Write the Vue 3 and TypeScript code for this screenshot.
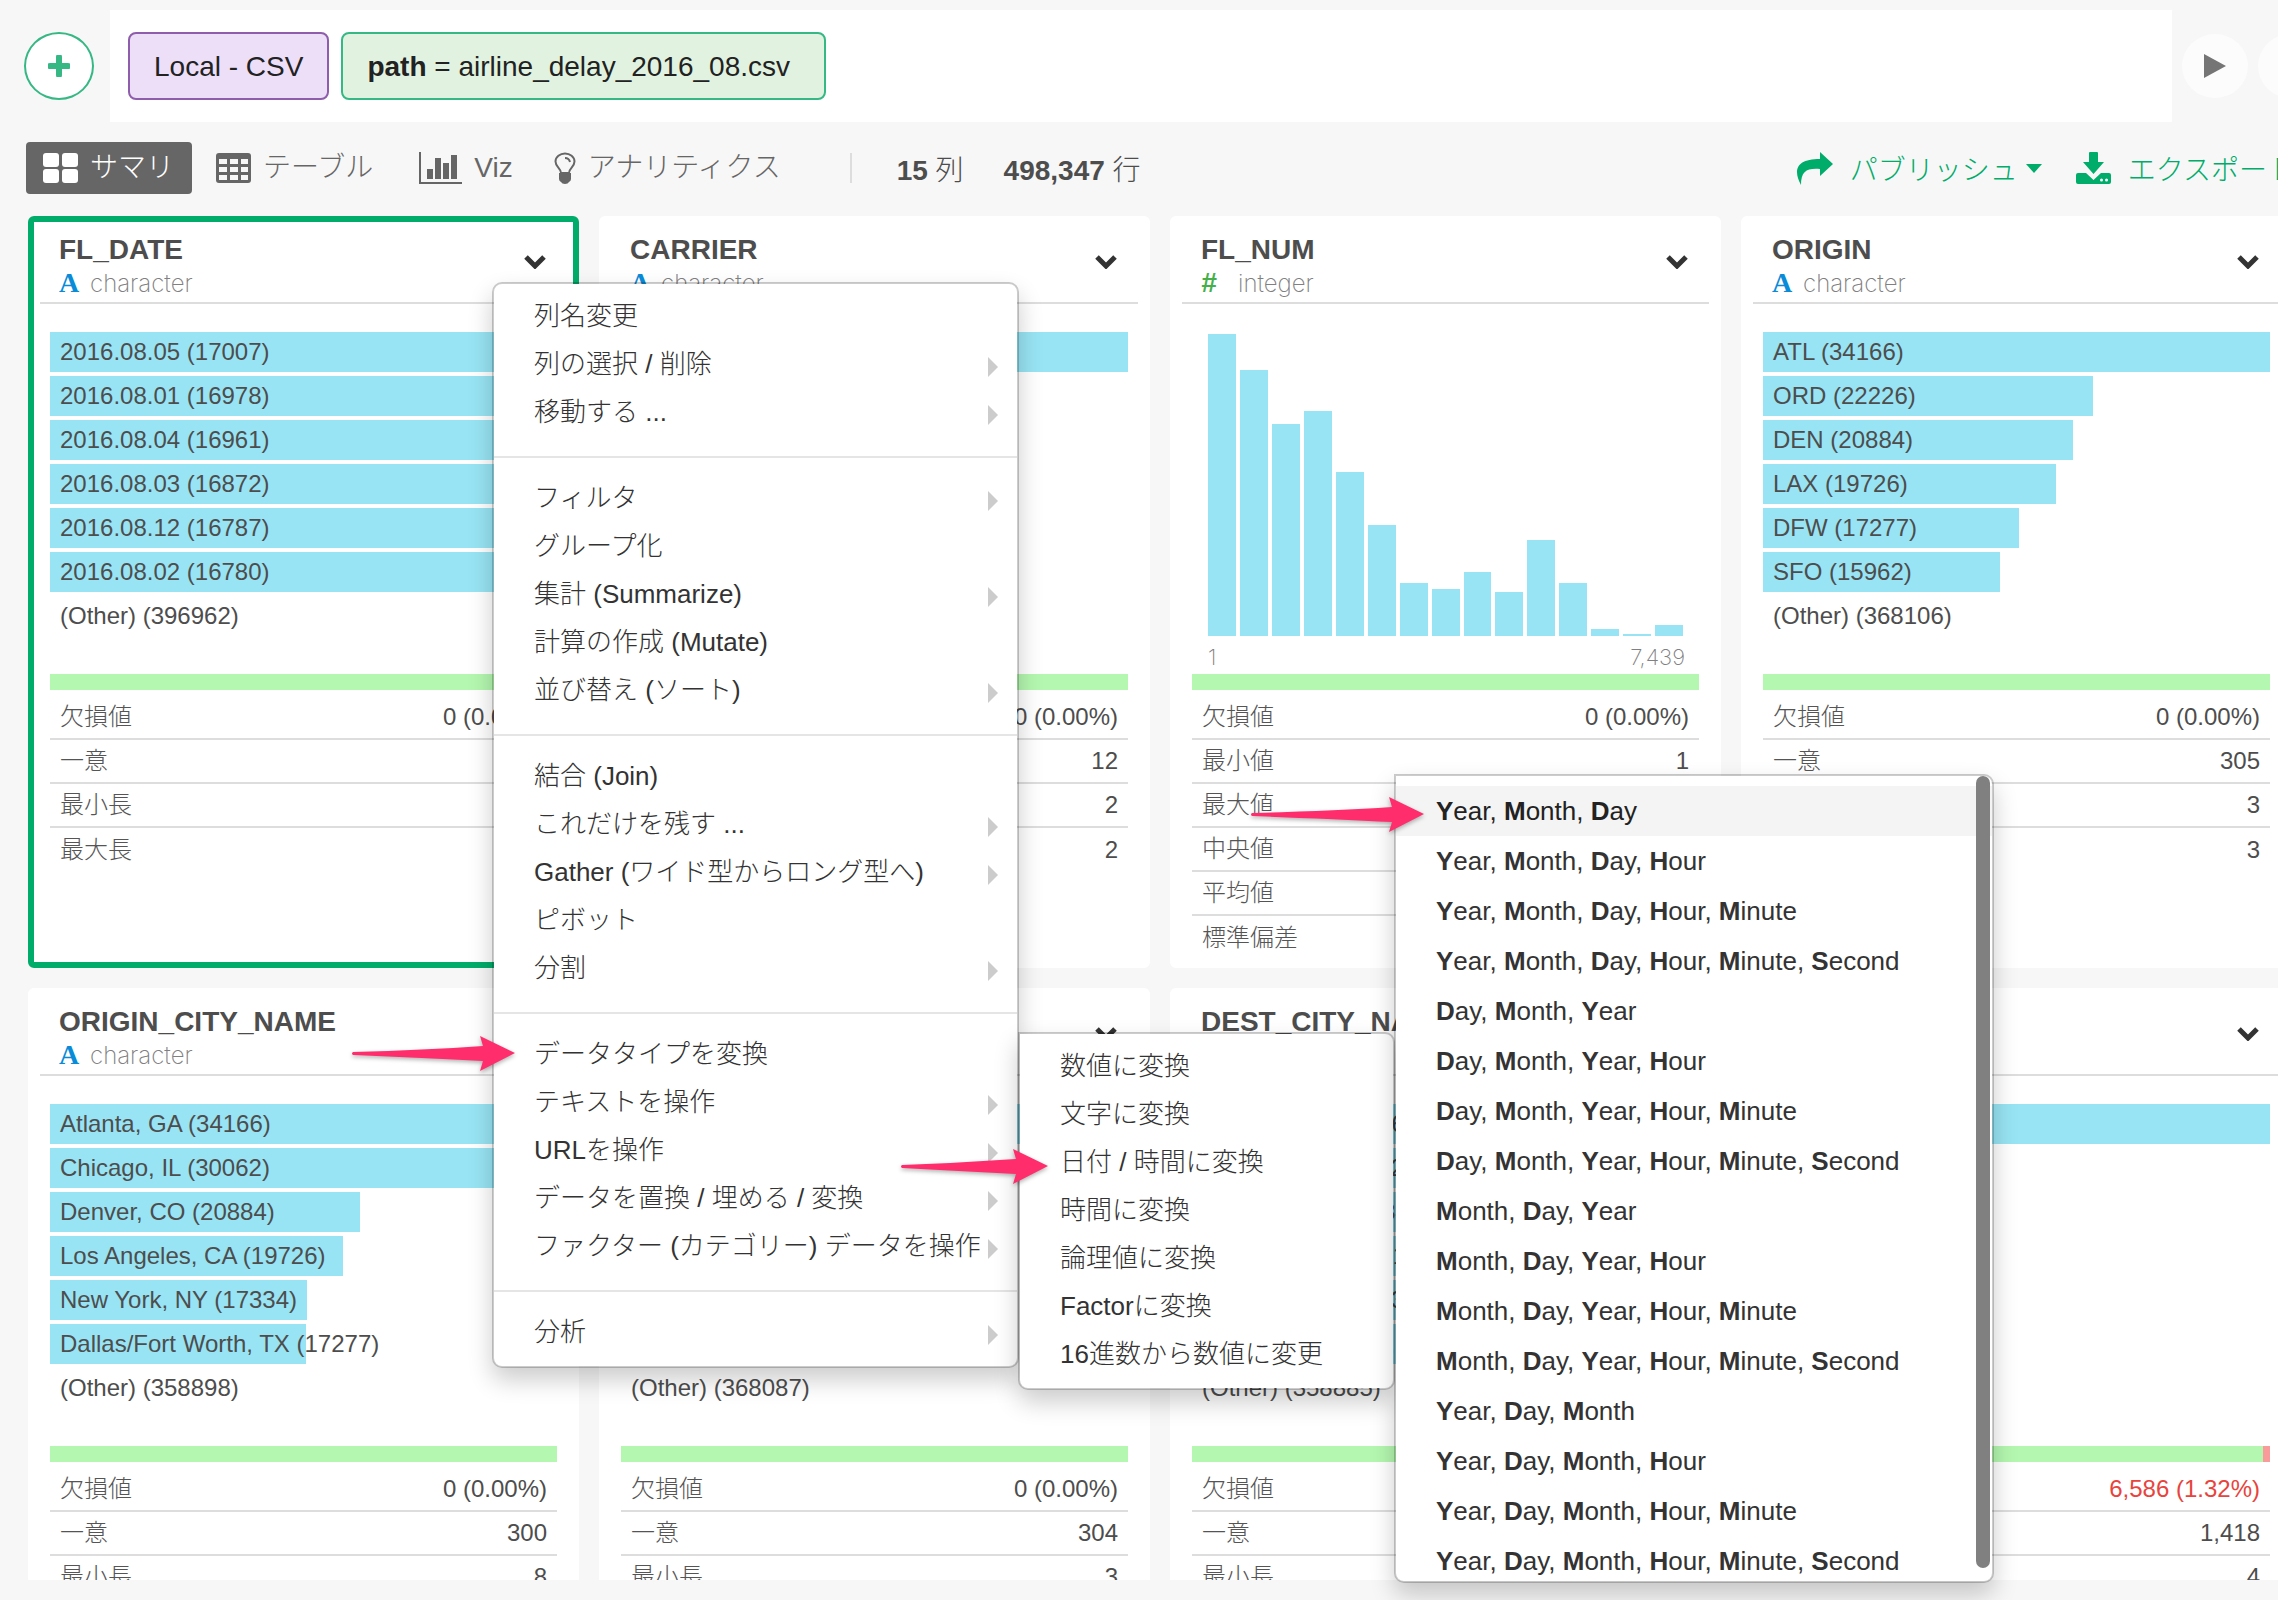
<script setup lang="ts">
interface Entry { label: string; count: number }
interface Stat { name: string; value: string; alert?: boolean }
interface Column {
  name: string
  kind: 'character' | 'integer'
  entries?: Entry[]
  other?: string
  histogram?: number[]
  range?: [string, string]
  valid: number
  stats: Stat[]
  selected?: boolean
}
interface MenuItem { text: string; sub?: boolean }
interface Arrow { x: number; y: number; length: number }

const none = '0 (0.00%)'

const textStats = (missing: string, unique: string, min: string, max: string, alert = false): Stat[] => [
  { name: '欠損値', value: missing, alert },
  { name: '一意', value: unique },
  { name: '最小長', value: min },
  { name: '最大長', value: max },
]

const cities: Entry[] = [
  { label: 'Atlanta, GA (34166)', count: 34166 },
  { label: 'Chicago, IL (30062)', count: 30062 },
  { label: 'Denver, CO (20884)', count: 20884 },
  { label: 'Los Angeles, CA (19726)', count: 19726 },
  { label: 'New York, NY (17334)', count: 17334 },
  { label: 'Dallas/Fort Worth, TX (17277)', count: 17277 },
]

const columns: Column[] = [
  {
    name: 'FL_DATE',
    kind: 'character',
    selected: true,
    entries: [
      { label: '2016.08.05 (17007)', count: 17007 },
      { label: '2016.08.01 (16978)', count: 16978 },
      { label: '2016.08.04 (16961)', count: 16961 },
      { label: '2016.08.03 (16872)', count: 16872 },
      { label: '2016.08.12 (16787)', count: 16787 },
      { label: '2016.08.02 (16780)', count: 16780 },
    ],
    other: '(Other) (396962)',
    valid: 100,
    stats: textStats(none, '', '', ''),
  },
  {
    name: 'CARRIER',
    kind: 'character',
    entries: [{ label: '', count: 1 }],
    valid: 100,
    stats: textStats(none, '12', '2', '2'),
  },
  {
    name: 'FL_NUM',
    kind: 'integer',
    histogram: [302, 266, 212, 225, 164, 111, 53, 47, 64, 44, 96, 53, 7, 2, 11],
    range: ['1', '7,439'],
    valid: 100,
    stats: [
      { name: '欠損値', value: none },
      { name: '最小値', value: '1' },
      { name: '最大値', value: '' },
      { name: '中央値', value: '' },
      { name: '平均値', value: '' },
      { name: '標準偏差', value: '' },
    ],
  },
  {
    name: 'ORIGIN',
    kind: 'character',
    entries: [
      { label: 'ATL (34166)', count: 34166 },
      { label: 'ORD (22226)', count: 22226 },
      { label: 'DEN (20884)', count: 20884 },
      { label: 'LAX (19726)', count: 19726 },
      { label: 'DFW (17277)', count: 17277 },
      { label: 'SFO (15962)', count: 15962 },
    ],
    other: '(Other) (368106)',
    valid: 100,
    stats: textStats(none, '305', '3', '3'),
  },
  {
    name: 'ORIGIN_CITY_NAME',
    kind: 'character',
    entries: cities,
    other: '(Other) (358898)',
    valid: 100,
    stats: textStats(none, '300', '8', ''),
  },
  {
    name: '',
    kind: 'character',
    entries: ['', '', '', '', '', ''].map((label, i) => ({ label, count: [34, 22, 21, 20, 17, 16][i] })),
    other: '(Other) (368087)',
    valid: 100,
    stats: textStats(none, '304', '3', ''),
  },
  {
    name: 'DEST_CITY_NAME',
    kind: 'character',
    entries: cities,
    other: '(Other) (358885)',
    valid: 100,
    stats: textStats('', '', '', ''),
  },
  {
    name: '',
    kind: 'character',
    entries: [{ label: '', count: 1 }],
    valid: 98.7,
    stats: textStats('6,586 (1.32%)', '1,418', '4', '', true),
  },
]

const share = (entry: Entry, all: Entry[]): string => `${(entry.count / all[0].count) * 100}%`

const columnMenu: MenuItem[][] = [
  [{ text: '列名変更' }, { text: '列の選択 / 削除', sub: true }, { text: '移動する ...', sub: true }],
  [
    { text: 'フィルタ', sub: true },
    { text: 'グループ化' },
    { text: '集計 (Summarize)', sub: true },
    { text: '計算の作成 (Mutate)' },
    { text: '並び替え (ソート)', sub: true },
  ],
  [
    { text: '結合 (Join)' },
    { text: 'これだけを残す ...', sub: true },
    { text: 'Gather (ワイド型からロング型へ)', sub: true },
    { text: 'ピボット' },
    { text: '分割', sub: true },
  ],
  [
    { text: 'データタイプを変換' },
    { text: 'テキストを操作', sub: true },
    { text: 'URLを操作', sub: true },
    { text: 'データを置換 / 埋める / 変換', sub: true },
    { text: 'ファクター (カテゴリー) データを操作', sub: true },
  ],
  [{ text: '分析', sub: true }],
]

const typeMenu: string[] = [
  '数値に変換',
  '文字に変換',
  '日付 / 時間に変換',
  '時間に変換',
  '論理値に変換',
  'Factorに変換',
  '16進数から数値に変更',
]

const orders: string[][] = [
  ['Year', 'Month', 'Day'],
  ['Day', 'Month', 'Year'],
  ['Month', 'Day', 'Year'],
  ['Year', 'Day', 'Month'],
]
const times: string[] = ['Hour', 'Minute', 'Second']
const dateFormats: string[][] = orders.flatMap((order) =>
  [0, 1, 2, 3].map((n) => [...order, ...times.slice(0, n)]),
)

const arrows: Arrow[] = [
  { x: 352, y: 1035, length: 163 },
  { x: 901, y: 1148, length: 147 },
  { x: 1251, y: 796, length: 173 },
]
const arrowPath = (l: number): string =>
  `M1 17 Q${l - 90} 15 ${l - 32} 11 L${l - 35} 1 L${l} 18 L${l - 35} 36 L${l - 32} 26 Q${l - 90} 23 1 20 Q-1 18.500 1 17Z`
</script>

<template>
  <div class="app">
    <header class="source-bar">
      <button class="add" type="button" aria-label="Add">
        <svg width="22" height="22" viewBox="0 0 22 22"><path d="M11 2V20M2 11H20" stroke="#35b884" stroke-width="6" stroke-linecap="round" /></svg>
      </button>
      <div class="steps">
        <button class="step step-local" type="button">Local - CSV</button>
        <button class="step step-path" type="button"><b>path</b> = airline_delay_2016_08.csv</button>
      </div>
      <button class="round" type="button" aria-label="Run">
        <svg width="22" height="24" viewBox="0 0 22 24"><path d="M0 0L22 12L0 24Z" fill="#757575" /></svg>
      </button>
      <button class="round" type="button" aria-label="More"></button>
    </header>

    <nav class="toolbar">
      <button class="tab active" type="button">
        <svg width="35" height="30" viewBox="0 0 35 30" fill="#fff">
          <rect width="16" height="14" rx="3" /><rect x="19" width="16" height="14" rx="3" />
          <rect y="16" width="16" height="14" rx="3" /><rect x="19" y="16" width="16" height="14" rx="3" />
        </svg>
        サマリ
      </button>
      <button class="tab" type="button">
        <svg width="35" height="30" viewBox="0 0 35 30">
          <rect width="35" height="30" rx="3" fill="#666" />
          <path d="M3 6h8v5h-8zM14 6h8v5h-8zM25 6h7v5h-7zM3 14h8v5h-8zM14 14h8v5h-8zM25 14h7v5h-7zM3 22h8v5h-8zM14 22h8v5h-8zM25 22h7v5h-7z" fill="#f7f7f7" />
        </svg>
        テーブル
      </button>
      <button class="tab tab-viz" type="button">
        <svg width="43" height="32" viewBox="0 0 43 32" fill="#666">
          <path d="M0 0h2v30h41v2h-43zM8 17h6v10h-6zM16 6h6v21h-6zM24 11h6v16h-6zM32 3h6v24h-6z" />
        </svg>
        Viz
      </button>
      <button class="tab tab-analytics" type="button">
        <svg width="22" height="32" viewBox="0 0 22 32">
          <path d="M7 21C7 16 1.500 15 1.500 9.500C1.500 5 6 1.500 11 1.500S20.500 5 20.500 9.500C20.500 15 15 16 15 21Z" fill="none" stroke="#666" stroke-width="2" />
          <path d="M11 6Q15 6 16 10" fill="none" stroke="#666" stroke-width="2" />
          <path d="M5 21h12v6q0 2-2 3q-1 2-4 2t-4-2q-2-1-2-3z" fill="#666" />
        </svg>
        アナリティクス
      </button>
      <span class="divider"></span>
      <div class="counts">
        <span><b>15</b> 列</span>
        <span><b>498,347</b> 行</span>
      </div>
      <span class="spacer"></span>
      <button class="action" type="button">
        <svg width="37" height="33" viewBox="0 0 37 33"><path d="M24 0L37 12L24 24V17C11 16 5 19 5 33C-3 18 0 7 24 7Z" fill="#00ac69" /></svg>
        <span class="action-text">パブリッシュ</span>
        <svg class="caret" width="16" height="9" viewBox="0 0 16 9"><path d="M0 0H16L8 9Z" fill="#00ac69" /></svg>
      </button>
      <button class="action action-export" type="button">
        <svg width="35" height="32" viewBox="0 0 35 32" fill="#00ac69">
          <path d="M14 0h7q1 0 1 1v9h6L17.500 22L7 10h6v-9q0-1 1-1z" />
          <path d="M2 21h8l7.500 7L25 21h8q2 0 2 2v7q0 2-2 2h-31q-2 0-2-2v-7q0-2 2-2z" />
          <circle cx="25.500" cy="28" r="1.500" fill="#fff" /><circle cx="30.500" cy="28" r="1.500" fill="#fff" />
        </svg>
        <span class="action-text">エクスポート</span>
      </button>
    </nav>

    <main class="cards">
      <section v-for="(col, i) in columns" :key="i" class="card" :class="{ selected: col.selected }">
        <header class="card-head">
          <div>
            <h2>{{ col.name }}</h2>
            <p class="kind">
              <span v-if="col.kind === 'integer'" class="hash">#</span>
              <span v-else class="letter">A</span>
              {{ col.kind }}
            </p>
          </div>
          <button class="chevron" type="button" aria-label="Column menu">
            <svg width="22" height="15" viewBox="0 0 22 15"><path d="M2 3L11 12L20 3" fill="none" stroke="#333" stroke-width="5" /></svg>
          </button>
        </header>
        <div class="card-body">
          <div v-if="col.histogram" class="distribution">
            <div class="histogram">
              <div v-for="(h, b) in col.histogram" :key="b" class="bin" :style="{ height: h + 'px' }"></div>
            </div>
            <div v-if="col.range" class="range"><span>{{ col.range[0] }}</span><span>{{ col.range[1] }}</span></div>
          </div>
          <div v-else class="distribution">
            <div v-for="(entry, e) in col.entries" :key="e" class="bar" :style="{ width: share(entry, col.entries!) }">{{ entry.label }}</div>
            <div v-if="col.other" class="bar other">{{ col.other }}</div>
          </div>
          <div class="quality"><div class="valid" :style="{ width: col.valid + '%' }"></div></div>
          <table class="stats">
            <tbody>
              <tr v-for="stat in col.stats" :key="stat.name">
                <th scope="row">{{ stat.name }}</th>
                <td :class="{ alert: stat.alert }">{{ stat.value }}</td>
              </tr>
            </tbody>
          </table>
        </div>
      </section>
    </main>

    <div class="menu column-menu">
      <ul v-for="(group, g) in columnMenu" :key="g">
        <li v-for="item in group" :key="item.text">
          <button type="button">
            {{ item.text }}
            <svg v-if="item.sub" width="10" height="20" viewBox="0 0 10 20"><path d="M0 0L10 10L0 20Z" fill="#ccc" /></svg>
          </button>
        </li>
      </ul>
    </div>

    <div class="menu type-menu">
      <ul>
        <li v-for="text in typeMenu" :key="text"><button type="button">{{ text }}</button></li>
      </ul>
    </div>

    <div class="menu date-menu">
      <ul>
        <li v-for="(format, f) in dateFormats" :key="f">
          <button type="button" :class="{ hover: f === 0 }">
            <span><template v-for="(part, p) in format" :key="part"><template v-if="p">, </template><b>{{ part[0] }}</b>{{ part.slice(1) }}</template></span>
          </button>
        </li>
      </ul>
      <div class="thumb"></div>
    </div>

    <svg
      v-for="(arrow, a) in arrows"
      :key="a"
      class="arrow"
      :style="{ left: arrow.x + 'px', top: arrow.y + 'px' }"
      :width="arrow.length"
      height="37"
    >
      <path :d="arrowPath(arrow.length)" fill="#ff2d6b" />
    </svg>
  </div>
</template>

<style>
html,
body {
  margin: 0;
  background: #f7f7f7;
}
</style>

<style scoped>
.app {
  position: relative;
  display: flex;
  flex-direction: column;
  height: 100vh;
  padding-bottom: 20px;
  box-sizing: border-box;
  overflow: hidden;
  background: #f7f7f7;
  color: #333;
  font-family: "Liberation Sans", "Noto Sans CJK JP", sans-serif;
  font-weight: 300;
}
b {
  font-weight: 700;
}
button {
  margin: 0;
  padding: 0;
  border: 0;
  background: none;
  color: inherit;
  font: inherit;
  white-space: nowrap;
  cursor: pointer;
}
svg {
  display: block;
  flex: none;
}
.source-bar {
  display: flex;
  flex: none;
  align-items: center;
  gap: 10px;
  height: 112px;
  margin: 10px -46px 0 24px;
}
.add {
  display: flex;
  align-items: center;
  justify-content: center;
  width: 70px;
  height: 68px;
  margin-right: 6px;
  border: 2px solid #35b884;
  border-radius: 50%;
  background: #fff;
}
.steps {
  display: flex;
  flex: 1;
  align-items: center;
  gap: 12px;
  height: 112px;
  padding-left: 18px;
  background: #fff;
}
.step {
  height: 68px;
  border: 2px solid;
  border-radius: 8px;
  color: #222;
  font-size: 28px;
}
.step-local {
  padding: 2px 24px 0;
  border-color: #8e5dab;
  background: #eddff8;
}
.step-path {
  padding: 2px 34px 0 24px;
  border-color: #35b884;
  background: #e1f3e0;
}
.round {
  display: flex;
  align-items: center;
  justify-content: center;
  width: 66px;
  height: 64px;
  border-radius: 50%;
  background: #fcfcfc;
}
.toolbar {
  display: flex;
  flex: none;
  align-items: center;
  height: 52px;
  margin: 20px -17px 22px 26px;
  color: #666;
  font-size: 28px;
}
.tab {
  display: flex;
  align-items: center;
  gap: 12px;
  height: 52px;
  padding: 0 6px 0 24px;
  line-height: 48px;
}
.tab.active {
  padding: 0 18px 0 17px;
  border-radius: 4px;
  background: #666;
  color: #fff;
}
.tab-viz {
  padding-left: 40px;
}
.tab-analytics {
  padding-left: 35px;
}
.divider {
  width: 2px;
  height: 30px;
  margin-left: 63px;
  background: #ddd;
}
.counts {
  display: flex;
  gap: 40px;
  margin-left: 45px;
  color: #4d4d4d;
  white-space: nowrap;
}
.spacer {
  flex: 1;
}
.action {
  display: flex;
  align-items: center;
  color: #00ac69;
}
.action-text {
  margin-left: 17px;
}
.caret {
  margin-left: 8px;
}
.action-export {
  margin-left: 34px;
}
.cards {
  display: grid;
  flex: 1;
  grid-template-columns: repeat(4, minmax(0, 1fr));
  align-content: start;
  gap: 20px;
  min-height: 0;
  margin: 0 -14px 0 28px;
  overflow: hidden;
}
.card {
  min-height: 752px;
  box-sizing: border-box;
  border: 6px solid #fff;
  border-radius: 6px;
  background: #fff;
}
.card.selected {
  border-color: #00ac69;
}
.card-head {
  display: flex;
  align-items: center;
  justify-content: space-between;
  margin: 0 6px;
  padding: 0 0 2px 19px;
  border-bottom: 2px solid #ddd;
}
.card-head h2 {
  height: 32px;
  margin: 0;
  padding-top: 12px;
  color: #4d4d4d;
  font-size: 28px;
  font-weight: 700;
  line-height: 32px;
}
.kind {
  display: flex;
  align-items: center;
  height: 34px;
  margin: 0;
  color: #808080;
  font-family: Inter, "Liberation Sans", sans-serif;
  font-size: 24px;
  font-weight: 200;
}
.letter {
  width: 31px;
  color: #0a8bd8;
  font-family: "Liberation Serif", serif;
  font-size: 28px;
  font-weight: 700;
}
.hash {
  width: 37px;
  color: #45b04a;
  font-family: "Liberation Sans", sans-serif;
  font-size: 28px;
  font-style: italic;
  font-weight: 700;
}
.chevron {
  display: flex;
  align-items: center;
  justify-content: center;
  width: 36px;
  height: 36px;
  margin-right: 14px;
}
.card-body {
  padding: 28px 16px 0;
}
.distribution {
  height: 342px;
}
.bar {
  height: 40px;
  margin-bottom: 4px;
  box-sizing: border-box;
  padding-left: 10px;
  background: #98e4f4;
  color: #4d4d4d;
  font-size: 24px;
  line-height: 40px;
  white-space: nowrap;
}
.bar.other {
  background: none;
}
.histogram {
  display: flex;
  align-items: flex-end;
  gap: 4px;
  height: 304px;
  padding: 0 16px;
}
.bin {
  flex: 1;
  background: #98e4f4;
}
.range {
  display: flex;
  justify-content: space-between;
  padding: 8px 14px 0 16px;
  color: #808080;
  font-family: Inter, "Liberation Sans", sans-serif;
  font-size: 22px;
  font-weight: 200;
  line-height: 26px;
}
.quality {
  height: 16px;
  margin-bottom: 5px;
  background: #f99b9b;
}
.valid {
  height: 16px;
  background: #b4f7b0;
}
.stats {
  width: 100%;
  border-collapse: collapse;
  font-size: 24px;
}
.stats tr {
  height: 44px;
  border-bottom: 2px solid #ddd;
}
.stats tr:last-child {
  border-bottom: 0;
}
.stats th,
.stats td {
  padding: 0 10px;
  line-height: 42px;
}
.stats th {
  color: #555;
  font-weight: 300;
  text-align: left;
}
.stats td {
  color: #4d4d4d;
  text-align: right;
}
.stats td.alert {
  color: #e8433c;
}
.menu {
  position: absolute;
  box-sizing: border-box;
  border: 2px solid rgba(0, 0, 0, 0.2);
  border-radius: 10px;
  background: #fff;
  background-clip: padding-box;
  box-shadow: 0 12px 24px rgba(0, 0, 0, 0.2);
  font-size: 26px;
}
.menu ul {
  margin: 0;
  padding: 0;
  list-style: none;
}
.menu button {
  display: flex;
  align-items: center;
  justify-content: space-between;
  width: 100%;
  height: 48px;
  padding: 0 19px 0 40px;
  line-height: 48px;
}
.menu svg {
  margin-top: 5px;
}
.column-menu {
  top: 282px;
  left: 492px;
  width: 527px;
  padding: 8px 0 10px;
}
.column-menu ul + ul {
  margin-top: 20px;
  padding-top: 16px;
  border-top: 2px solid #e5e5e5;
}
.type-menu {
  top: 1032px;
  left: 1018px;
  width: 377px;
  padding: 8px 0 10px;
  border-top-left-radius: 0;
}
.date-menu {
  top: 774px;
  bottom: 17px;
  left: 1394px;
  width: 600px;
  padding-top: 10px;
  border-top-left-radius: 0;
  overflow: hidden;
}
.date-menu button {
  height: 50px;
}
.date-menu button.hover {
  background: #f4f4f4;
  color: #222;
}
.thumb {
  position: absolute;
  top: 0;
  right: 2px;
  bottom: 13px;
  width: 14px;
  border-radius: 7px;
  background: #808080;
}
.arrow {
  position: absolute;
  overflow: visible;
  filter: drop-shadow(0 2px 2px rgba(0, 0, 0, 0.3));
}
</style>
